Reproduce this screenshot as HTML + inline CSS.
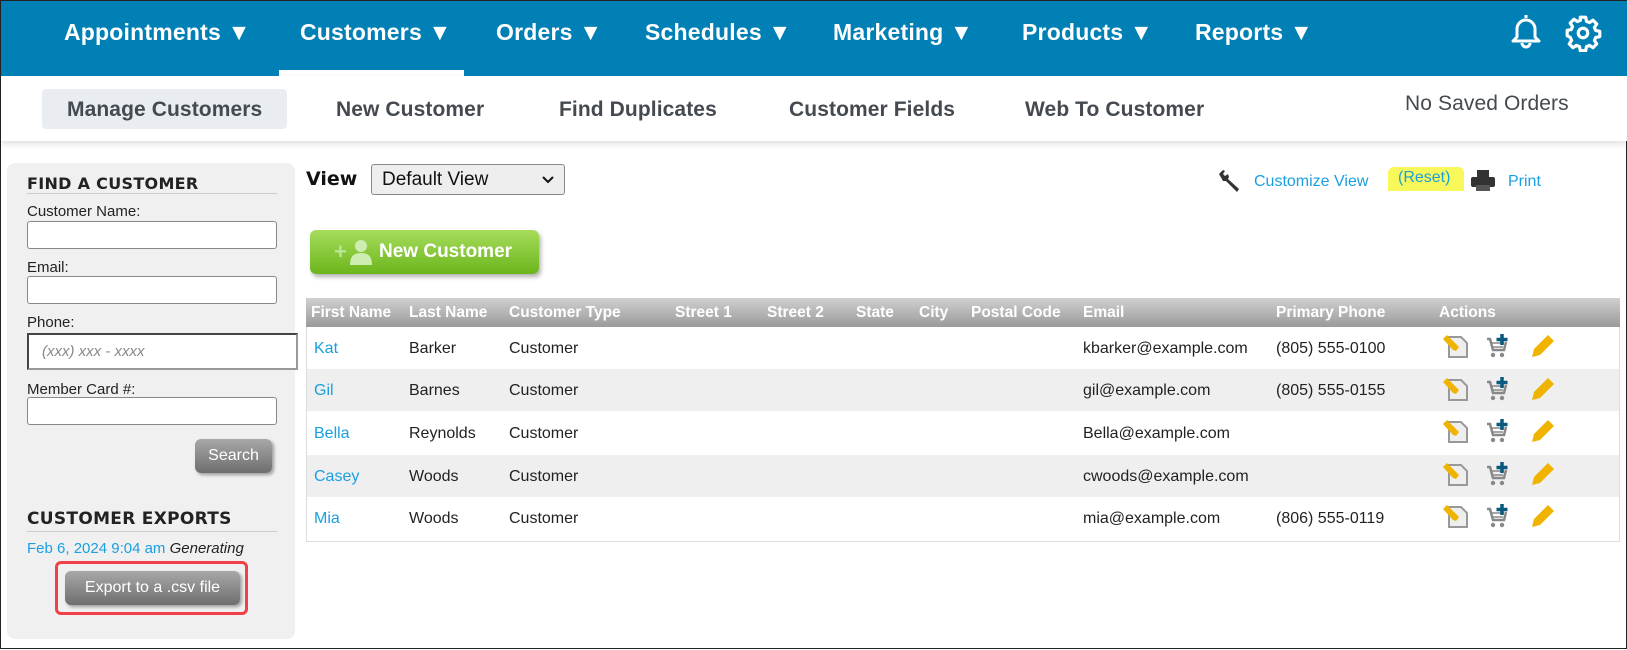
<!DOCTYPE html>
<html><head><meta charset="utf-8"><style>
*{box-sizing:border-box;margin:0;padding:0}
body{width:1627px;height:649px;overflow:hidden;background:#fff;font-family:"Liberation Sans",Arial,sans-serif;position:relative;border:1px solid #222}
.a{position:absolute;white-space:nowrap}
.nav{position:absolute;left:0;top:0;width:1627px;height:75px;background:#0180b6}
.nav .a{color:#fff;font-size:23px;font-weight:bold;top:18px;letter-spacing:0.2px}
.sub{position:absolute;left:0;top:75px;width:1627px;height:65px;background:#fff;box-shadow:0 3px 6px rgba(0,0,0,.12)}
.sub .a{color:#454a50;font-size:21px;top:22px;font-weight:bold;letter-spacing:0.1px}
.panel{position:absolute;left:6px;top:162px;width:288px;height:476px;background:#f0f0f0;border-radius:8px}
.lbl{font-size:15px;color:#222}
.inp{position:absolute;background:#fff;border:1px solid #888;border-radius:3px}
.h{font-family:"DejaVu Sans",sans-serif;font-weight:bold;font-size:16px;color:#222;letter-spacing:0.3px}
.btn{position:absolute;background:linear-gradient(#a8a8a8,#6e6e6e);color:#fff;border-radius:6px;font-size:16px;text-align:center;box-shadow:2px 2px 3px rgba(0,0,0,.35)}
.tbl{position:absolute;left:305px;top:297px;width:1314px;height:244px;border:1px solid #ddd;border-top:none}
.th{position:absolute;left:305px;top:297px;width:1314px;height:29px;background:linear-gradient(#d0d0d0,#9a9a9a)}
.th .a{color:#fff;font-weight:bold;font-size:15.5px;top:6px}
.row{position:absolute;left:306px;width:1312px;height:42px}
.row .a{font-size:16px;color:#222;top:13px}
.row .l{color:#1a9fe0}
</style></head><body>
<div class="nav">
<div class="a" style="left:63px">Appointments ▼</div>
<div class="a" style="left:299px">Customers ▼</div>
<div class="a" style="left:495px">Orders ▼</div>
<div class="a" style="left:644px">Schedules ▼</div>
<div class="a" style="left:832px">Marketing ▼</div>
<div class="a" style="left:1021px">Products ▼</div>
<div class="a" style="left:1194px">Reports ▼</div>
<div style="position:absolute;left:278px;top:69px;width:185px;height:6px;background:#fff"></div>
<svg class="a" style="left:1506px;top:11px" width="38" height="38" viewBox="0 0 38 38" fill="none" stroke="#fff" stroke-width="3" stroke-linejoin="round"><path d="M19 3v3M10 17a9 9 0 0 1 18 0v8l4 4H6l4-4z"/><path d="M15 31a4 4 0 0 0 8 0"/></svg>
<svg class="a" style="left:1563px;top:13px" width="38" height="38" viewBox="0 0 24 24" fill="none" stroke="#fff" stroke-width="2" stroke-linejoin="round"><circle cx="12" cy="12" r="3"/><path d="M10.3 2h3.4l.5 2.6 1.9.8 2.2-1.5 2.4 2.4-1.5 2.2.8 1.9 2.6.5v3.4l-2.6.5-.8 1.9 1.5 2.2-2.4 2.4-2.2-1.5-1.9.8-.5 2.6h-3.4l-.5-2.6-1.9-.8-2.2 1.5-2.4-2.4 1.5-2.2-.8-1.9L2 13.7v-3.4l2.6-.5.8-1.9-1.5-2.2 2.4-2.4 2.2 1.5 1.9-.8z"/></svg>
</div>
<div class="sub">
<div style="position:absolute;left:41px;top:13px;width:245px;height:40px;background:#e9ecf0;border-radius:4px"></div>
<div class="a" style="left:66px">Manage Customers</div>
<div class="a" style="left:335px">New Customer</div>
<div class="a" style="left:558px">Find Duplicates</div>
<div class="a" style="left:788px">Customer Fields</div>
<div class="a" style="left:1024px">Web To Customer</div>
<div class="a" style="left:1404px;top:16px;font-weight:normal">No Saved Orders</div>
</div>
<div class="panel"></div>
<div class="a h" style="left:26px;top:173px">FIND A CUSTOMER</div>
<div style="position:absolute;left:26px;top:192px;width:250px;height:1px;background:#ccc"></div>
<div class="a lbl" style="left:26px;top:202px">Customer Name:</div>
<div class="inp" style="left:26px;top:220px;width:250px;height:28px"></div>
<div class="a lbl" style="left:26px;top:258px">Email:</div>
<div class="inp" style="left:26px;top:275px;width:250px;height:28px"></div>
<div class="a lbl" style="left:26px;top:313px">Phone:</div>
<div class="inp" style="left:26px;top:332px;width:271px;height:37px;border:2px inset #999;border-radius:0"></div>
<div class="a" style="left:41px;top:342px;font-size:15px;font-style:italic;color:#888">(xxx) xxx - xxxx</div>
<div class="a lbl" style="left:26px;top:380px">Member Card #:</div>
<div class="inp" style="left:26px;top:396px;width:250px;height:28px"></div>
<div class="btn" style="left:194px;top:438px;width:77px;height:34px;line-height:34px">Search</div>
<div class="a h" style="left:26px;top:508px;font-size:17px">CUSTOMER EXPORTS</div>
<div style="position:absolute;left:26px;top:530px;width:250px;height:1px;background:#ccc"></div>
<div class="a" style="left:26px;top:539px;font-size:15px;color:#1a9fe0">Feb 6, 2024 9:04 am <i style="color:#222">Generating</i></div>
<div style="position:absolute;left:54px;top:560px;width:193px;height:54px;border:3px solid #f04048;border-radius:6px"></div>
<div class="btn" style="left:64px;top:570px;width:175px;height:34px;line-height:34px">Export to a .csv file</div>

<div class="a" style="left:305px;top:167px;font-family:'DejaVu Sans',sans-serif;font-weight:bold;font-size:19px;color:#111">View</div>
<div style="position:absolute;left:370px;top:163px;width:194px;height:31px;border:1px solid #888;border-radius:3px;background:#eee"></div>
<div class="a" style="left:381px;top:168px;font-size:19px;color:#111">Default View</div>
<svg class="a" style="left:541px;top:174px" width="12" height="10" viewBox="0 0 12 10"><path d="M1 2l5 5 5-5" fill="none" stroke="#111" stroke-width="2"/></svg>
<svg class="a" style="left:1216px;top:168px" width="24" height="24" viewBox="0 0 24 24"><path d="M2 5l4-4 2 1-2 3 2 2 3-2 1 3-1 2 11 10-2 3L9 12l-3 0z" fill="#333"/></svg>
<div class="a" style="left:1253px;top:172px;font-size:16px;color:#1a9fe0">Customize View</div>
<div style="position:absolute;left:1387px;top:166px;width:76px;height:24px;background:#f8f85a;border-radius:6px 6px 0 0"></div>
<div class="a" style="left:1397px;top:168px;font-size:16px;color:#1a9fe0">(Reset)</div>
<svg class="a" style="left:1470px;top:169px" width="24" height="22" viewBox="0 0 24 22"><rect x="6" y="0" width="12" height="7" fill="#333"/><rect x="0" y="7" width="24" height="10" rx="2" fill="#333"/><rect x="5" y="15" width="14" height="6" fill="#555"/></svg>
<div class="a" style="left:1507px;top:172px;font-size:16px;color:#1a9fe0">Print</div>

<div style="position:absolute;left:309px;top:229px;width:229px;height:44px;border-radius:6px;background:linear-gradient(#a6dc5c,#6cb61c);box-shadow:2px 3px 4px rgba(0,0,0,.3)"></div>
<div class="a" style="left:333px;top:238px;font-size:22px;font-weight:bold;color:#b9e69a">+</div>
<svg class="a" style="left:349px;top:238px" width="22" height="26" viewBox="0 0 22 26"><circle cx="11" cy="7" r="6" fill="#cdeeb0"/><path d="M0 26c0-9 4-12 11-12s11 3 11 12z" fill="#cdeeb0"/></svg>
<div class="a" style="left:378px;top:240px;font-size:19px;font-weight:bold;color:#fff">New Customer</div>

<div class="tbl"></div>
<div class="th">
<div class="a" style="left:5px">First Name</div><div class="a" style="left:103px">Last Name</div><div class="a" style="left:203px">Customer Type</div><div class="a" style="left:369px">Street 1</div><div class="a" style="left:461px">Street 2</div><div class="a" style="left:550px">State</div><div class="a" style="left:613px">City</div><div class="a" style="left:665px">Postal Code</div><div class="a" style="left:777px">Email</div><div class="a" style="left:970px">Primary Phone</div><div class="a" style="left:1133px">Actions</div>
</div>

<div class="row" style="top:326px;background:#fff"><div class="a l" style="left:7px">Kat</div><div class="a" style="left:102px">Barker</div><div class="a" style="left:202px">Customer</div><div class="a" style="left:776px">kbarker@example.com</div><div class="a" style="left:969px">(805) 555-0100</div></div>
<div class="row" style="top:368px;background:#efefef"><div class="a l" style="left:7px">Gil</div><div class="a" style="left:102px">Barnes</div><div class="a" style="left:202px">Customer</div><div class="a" style="left:776px">gil@example.com</div><div class="a" style="left:969px">(805) 555-0155</div></div>
<div class="row" style="top:411px;background:#fff"><div class="a l" style="left:7px">Bella</div><div class="a" style="left:102px">Reynolds</div><div class="a" style="left:202px">Customer</div><div class="a" style="left:776px">Bella@example.com</div></div>
<div class="row" style="top:454px;background:#efefef"><div class="a l" style="left:7px">Casey</div><div class="a" style="left:102px">Woods</div><div class="a" style="left:202px">Customer</div><div class="a" style="left:776px">cwoods@example.com</div></div>
<div class="row" style="top:496px;background:#fff"><div class="a l" style="left:7px">Mia</div><div class="a" style="left:102px">Woods</div><div class="a" style="left:202px">Customer</div><div class="a" style="left:776px">mia@example.com</div><div class="a" style="left:969px">(806) 555-0119</div></div>

<svg class="a" style="left:0;top:0" width="1627" height="649">
<defs>
<g id="ic">
<path d="M6 4h12l6 6v14H6z" fill="#eee" stroke="#999" stroke-width="2"/>
<path d="M0 6l4-4 12 12-3 4-3-1z" fill="#f0b400"/>
<path d="M44 6h3l3 11h11l2-8" fill="none" stroke="#888" stroke-width="2.5"/>
<path d="M48 10h13M49 14h11" stroke="#888" stroke-width="1.5"/>
<circle cx="50" cy="22" r="2.2" fill="#888"/><circle cx="59" cy="22" r="2.2" fill="#888"/>
<path d="M59 1v11M53.5 6.5h11" stroke="#0a5a80" stroke-width="3.5"/>
<path d="M89 24l2-8 14-14 6 6-14 14z" fill="#f0b400"/>
</g>
</defs>
<use href="#ic" x="1442" y="332"/>
<use href="#ic" x="1442" y="375"/>
<use href="#ic" x="1442" y="417"/>
<use href="#ic" x="1442" y="460"/>
<use href="#ic" x="1442" y="502"/>
</svg>
</body></html>
